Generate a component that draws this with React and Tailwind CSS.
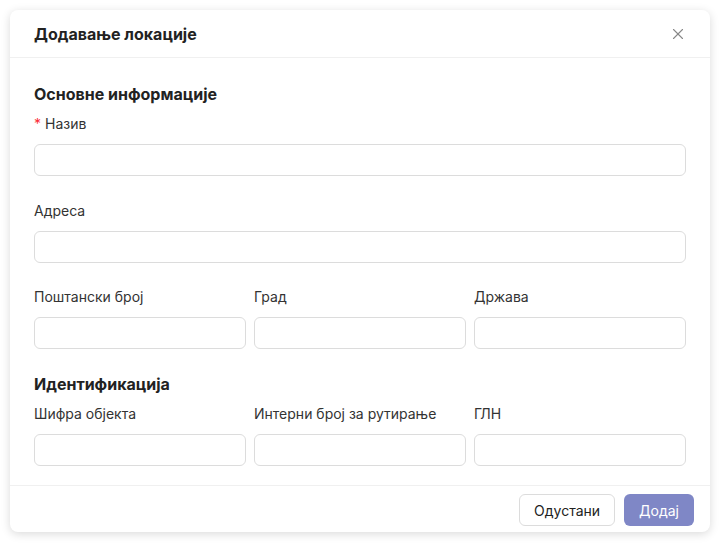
import { X } from 'lucide-react';

const Field = ({ label, required }) => (
    <div className="flex flex-col">
        <label className="text-[14px] leading-5 text-[#333] mb-[10px]">
            {required && <span className="text-red-500 mr-1">*</span>}
            {label}
        </label>
        <input className="h-8 w-full rounded-md border border-[#dcdcdc] bg-white px-3 text-[14px] outline-none" />
    </div>
);

export default function App() {
    return (
        <div className="min-h-screen bg-white p-[10px] font-['Inter',sans-serif]">
            <div className="w-[700px] h-[522px] bg-white rounded-lg shadow-[0_2px_10px_rgba(0,0,0,0.15)] flex flex-col">
                <div className="h-12 px-6 flex items-center justify-between border-b border-[#f0f0f0]">
                    <h2 className="text-[16px] font-bold text-[#222]">Додавање локације</h2>
                    <button className="text-[#888] -mr-px">
                        <X size={18} strokeWidth={1.5} />
                    </button>
                </div>
                <div className="flex-1 px-6 pt-[26px]">
                    <h3 className="text-[16px] leading-5 font-bold text-[#222] mb-[10px]">Основне информације</h3>
                    <Field label="Назив" required />
                    <div className="mt-[25px]">
                        <Field label="Адреса" />
                    </div>
                    <div className="mt-[24px] grid grid-cols-3 gap-2">
                        <Field label="Поштански број" />
                        <Field label="Град" />
                        <Field label="Држава" />
                    </div>
                    <h3 className="mt-[25px] text-[16px] leading-5 font-bold text-[#222] mb-[10px]">Идентификација</h3>
                    <div className="grid grid-cols-3 gap-2">
                        <Field label="Шифра објекта" />
                        <Field label="Интерни број за рутирање" />
                        <Field label="ГЛН" />
                    </div>
                </div>
                <div className="border-t border-[#f0f0f0] px-4 pt-2 pb-[6px] flex justify-end gap-[9px]">
                    <button className="h-8 px-[14px] rounded-md border border-[#dcdcdc] bg-white text-[14px] text-[#222]">Одустани</button>
                    <button className="h-8 px-[15px] rounded-md bg-[#7f87c6] text-[14px] text-white">Додај</button>
                </div>
            </div>
        </div>
    );
}
